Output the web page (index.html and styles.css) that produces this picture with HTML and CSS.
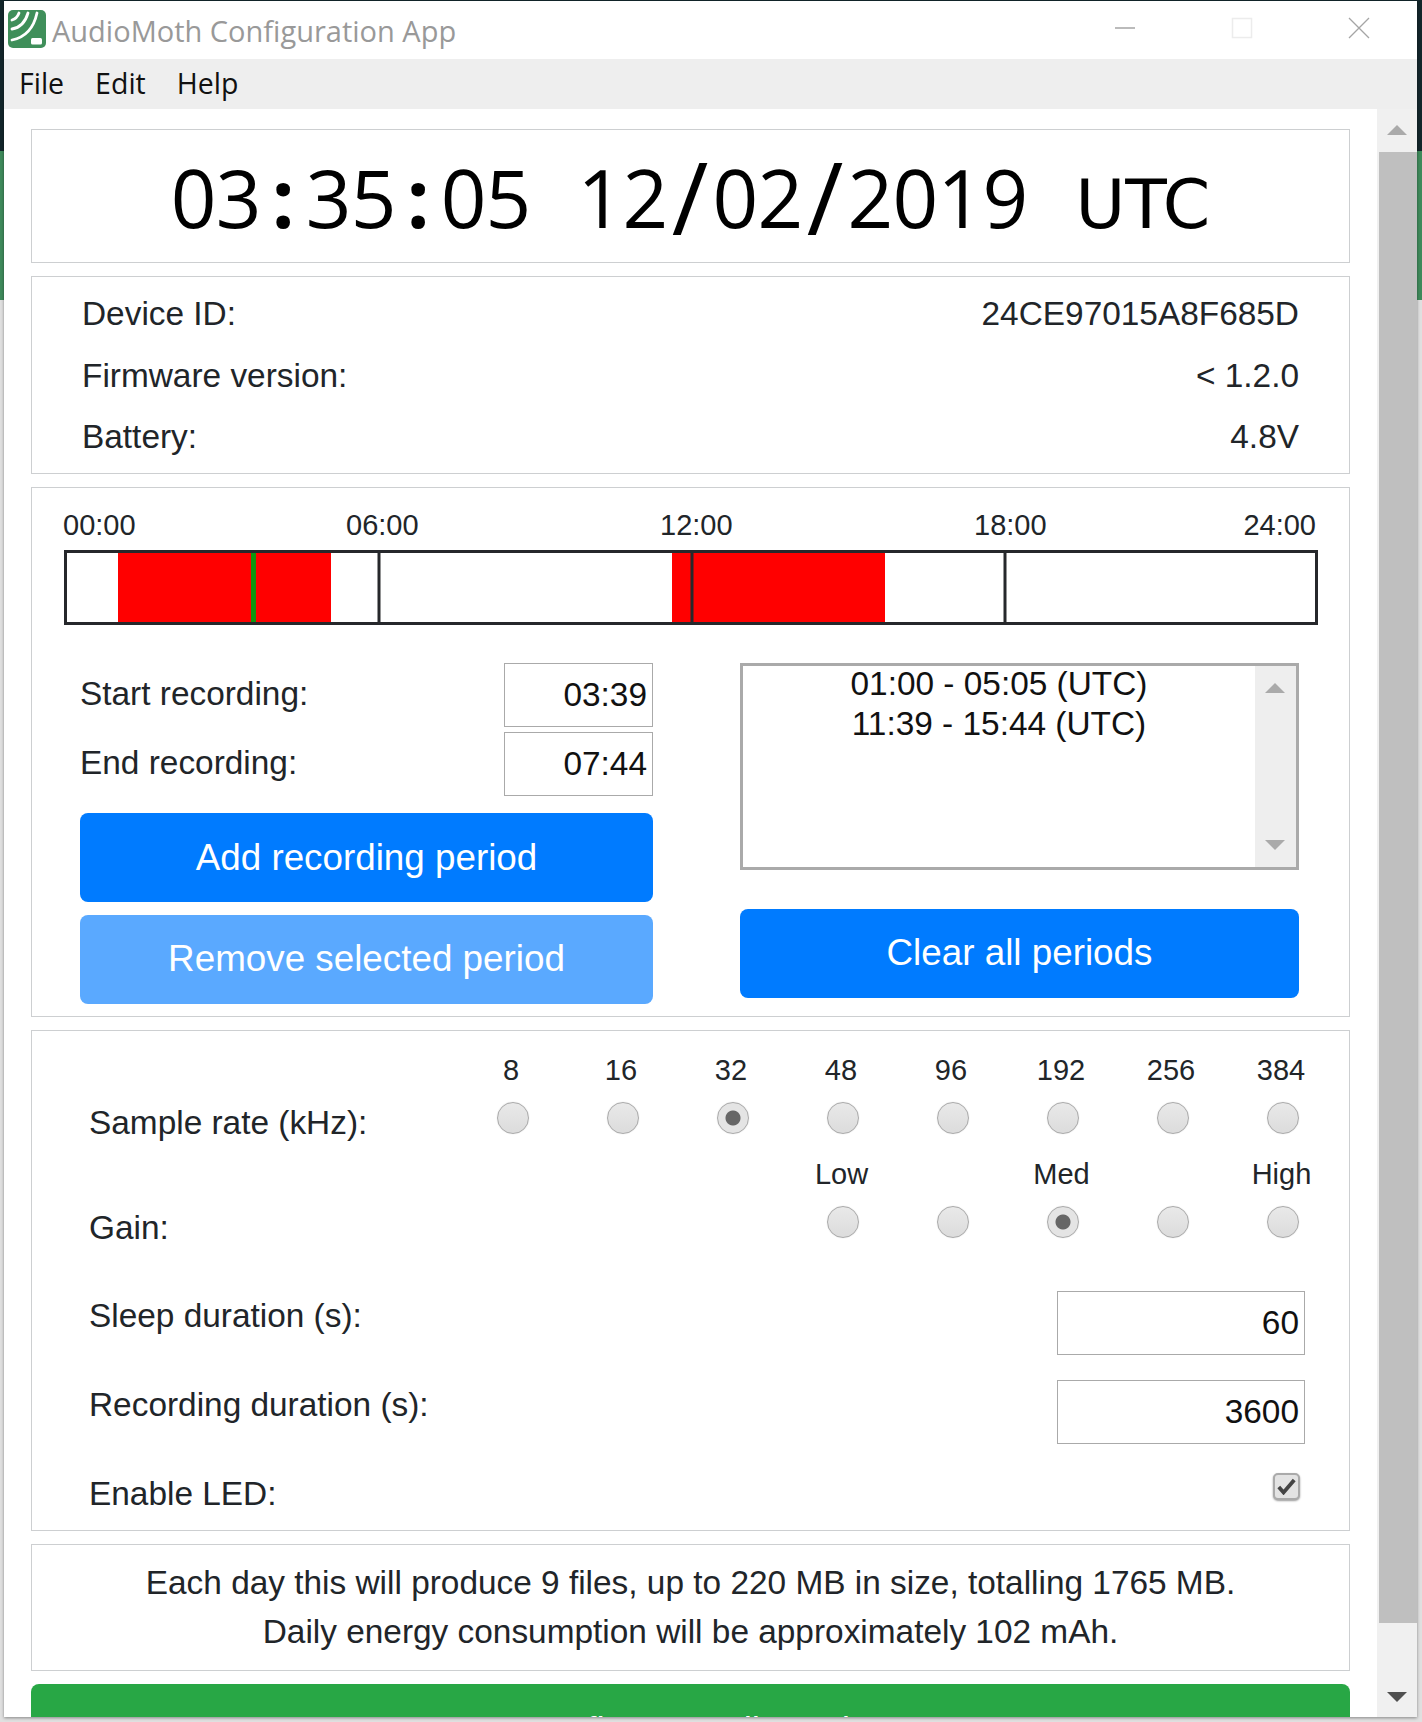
FILE: index.html
```html
<!DOCTYPE html>
<html lang="en">
<head>
<meta charset="utf-8">
<title>AudioMoth Configuration App</title>
<link rel="stylesheet" href="styles.css">
</head>
<body>
<div class="window">
  <header class="titlebar">
    <svg class="logo" viewBox="0 0 38 38"><rect width="38" height="38" rx="5" fill="#3f8f5a"/><g fill="none" stroke="#fff" stroke-width="2.800" stroke-linecap="round"><path d="M4 10Q9 8.500 11 3"/><path d="M4 19Q16 17 20 3"/><path d="M4 30Q24 26 29 3"/></g><rect x="23" y="28" width="11" height="6.500" rx="1.500" fill="#fff"/></svg>
    <span class="apptitle">AudioMoth Configuration App</span>
    <div class="winctl">
      <span class="ctl"><svg viewBox="0 0 22 22"><path d="M1 11h20" stroke="#a5a5a5" stroke-width="1.500"/></svg></span>
      <span class="ctl"><svg viewBox="0 0 22 22"><rect x="1.500" y="1.500" width="19" height="19" fill="none" stroke="#ececec" stroke-width="1.500"/></svg></span>
      <span class="ctl"><svg viewBox="0 0 22 22"><path d="M1 1l20 20M21 1L1 21" stroke="#a5a5a5" stroke-width="1.300"/></svg></span>
    </div>
  </header>
  <nav class="menubar"><span>File</span><span>Edit</span><span>Help</span></nav>
  <div class="viewport">
    <main class="content">
      <section class="panel clock"><span class="time">03<i class="colon">:</i>35<i class="colon">:</i>05 12<i class="slash">/</i>02<i class="slash">/</i>2019</span><span class="zone">UTC</span></section>
      <section class="panel device">
        <div class="devrow"><span>Device ID:</span><span>24CE97015A8F685D</span></div>
        <div class="devrow"><span>Firmware version:</span><span>&lt; 1.2.0</span></div>
        <div class="devrow"><span>Battery:</span><span>4.8V</span></div>
      </section>
      <section class="panel schedule">
        <div class="ticks"><span>00:00</span><span>06:00</span><span>12:00</span><span>18:00</span><span>24:00</span></div>
        <svg class="timeline" viewBox="0 0 1254 75" preserveAspectRatio="none">
          <rect x="0" y="0" width="1254" height="75" fill="#fff"/>
          <rect x="54" y="0" width="213" height="75" fill="#f00"/>
          <rect x="608" y="0" width="213" height="75" fill="#f00"/>
          <rect x="187" y="0" width="5" height="75" fill="#0f960f"/>
          <path d="M315 0v75M628 0v75M941 0v75" stroke="#26282b" stroke-width="3"/>
          <rect x="1.500" y="1.500" width="1251" height="72" fill="none" stroke="#26282b" stroke-width="3"/>
        </svg>
        <div class="periods">
          <div class="pcol">
            <div class="timerow"><label>Start recording:</label><div class="field small">03:39</div></div>
            <div class="timerow"><label>End recording:</label><div class="field small">07:44</div></div>
            <button class="btn add">Add recording period</button>
            <button class="btn faded">Remove selected period</button>
          </div>
          <div class="pcol right">
            <div class="listbox">
              <div class="items"><div>01:00 - 05:05 (UTC)</div><div>11:39 - 15:44 (UTC)</div></div>
              <div class="listscroll"><i class="up"></i><i class="down"></i></div>
            </div>
            <button class="btn clear">Clear all periods</button>
          </div>
        </div>
      </section>
      <section class="panel settings">
        <div class="setrow rate">
          <label>Sample rate (kHz):</label>
          <div class="radios">
            <div class="opt"><span>8</span><i class="radio"></i></div>
            <div class="opt"><span>16</span><i class="radio"></i></div>
            <div class="opt"><span>32</span><i class="radio on"></i></div>
            <div class="opt"><span>48</span><i class="radio"></i></div>
            <div class="opt"><span>96</span><i class="radio"></i></div>
            <div class="opt"><span>192</span><i class="radio"></i></div>
            <div class="opt"><span>256</span><i class="radio"></i></div>
            <div class="opt"><span>384</span><i class="radio"></i></div>
          </div>
        </div>
        <div class="setrow gain">
          <label>Gain:</label>
          <div class="radios">
            <div class="opt"><span>Low</span><i class="radio"></i></div>
            <div class="opt"><span>&nbsp;</span><i class="radio"></i></div>
            <div class="opt"><span>Med</span><i class="radio on"></i></div>
            <div class="opt"><span>&nbsp;</span><i class="radio"></i></div>
            <div class="opt"><span>High</span><i class="radio"></i></div>
          </div>
        </div>
        <div class="setrow dur"><label>Sleep duration (s):</label><div class="field wide">60</div></div>
        <div class="setrow dur"><label>Recording duration (s):</label><div class="field wide">3600</div></div>
        <div class="setrow led"><label>Enable LED:</label><span class="check"><svg viewBox="0 0 16 14"><path d="M1.500 7.500l4 4.500L14.500 1.500" fill="none" stroke="#444" stroke-width="3.200"/></svg></span></div>
      </section>
      <section class="panel summary">
        <p>Each day this will produce 9 files, up to 220 MB in size, totalling 1765 MB.</p>
        <p>Daily energy consumption will be approximately 102 mAh.</p>
      </section>
      <button class="btn configure">Configure AudioMoth</button>
    </main>
    <aside class="scrollbar">
      <i class="sb-up"></i>
      <div class="thumb"></div>
      <i class="sb-down"></i>
    </aside>
  </div>
</div>
</body>
</html>
```
FILE: styles.css
```css
* { box-sizing: border-box; }
html, body { margin: 0; height: 100%; }
body {
  width: 1422px; height: 1722px; overflow: hidden;
  background: linear-gradient(#13262b 0, #13262b 151px, #3f8a5b 151px, #3f8a5b 300px, #e0e0e0 300px);
  font-family: "Liberation Sans", Arial, sans-serif; color: #212529;
  padding: 1px 5px 5px 4px;
}
.window { width: 1413px; height: 1716px; background: #fff; display: flex; flex-direction: column; overflow: hidden; box-shadow: 0 1px 3px rgba(0,0,0,.4); }
.titlebar { height: 58px; flex: none; display: flex; align-items: center; padding-left: 4px; }
.logo { width: 38px; height: 38px; margin-top: -2px; flex: none; }
.apptitle { font: 29px "Open Sans", sans-serif; color: #999; margin-left: 6px; margin-top: 1px; }
.winctl { margin-left: auto; display: flex; align-items: center; margin-right: 47px; gap: 95px; margin-top: -4px; }
.ctl { width: 22px; height: 22px; display: block; }
.ctl svg { width: 22px; height: 22px; display: block; }
.menubar { height: 50px; flex: none; background: #eee; display: flex; align-items: center; padding-left: 15px; gap: 31px; font: 28.500px "Open Sans", sans-serif; color: #111; padding-bottom: 3px; }
.viewport { flex: 1; display: flex; min-height: 0; position: relative; }
.content { width: 1373px; flex: none; padding: 20px 0 0 27px; display: flex; flex-direction: column; gap: 13px; overflow: hidden; }
.panel { width: 1319px; border: 1px solid #cdcfd1; flex: none; background: #fff; }
.clock { height: 134px; display: flex; justify-content: center; align-items: baseline; color: #000; padding-top: 27px; }
.time { font: 80px "Open Sans", sans-serif; line-height: 1; letter-spacing: -.76px; word-spacing: 27px; white-space: nowrap; }
.colon, .slash { display: inline-block; width: 45px; text-align: center; font-style: normal; letter-spacing: 0; line-height: 0; }
.colon { font-weight: 700; }
.slash { font-size: 100px; vertical-align: -7px; }
.zone { font: 68px "DejaVu Sans", sans-serif; margin-left: 48px; line-height: 1; }
.device { height: 198px; padding: 17px 50px 0 50px; font-size: 33.400px; }
.devrow { display: flex; justify-content: space-between; height: 61.500px; line-height: 40px; }
.schedule { height: 530px; padding: 21px 32px 0; }
.ticks { display: grid; grid-template-columns: 283px 314px 314px 1fr auto; font-size: 29px; line-height: 32px; height: 32px; margin: 0 1px 9px -1px; }
.ticks span { display: block; }
.timeline { display: block; width: 1254px; height: 75px; }
.periods { display: flex; justify-content: space-between; padding: 38px 18px 0 16px; }
.pcol { display: flex; flex-direction: column; width: 573px; }
.pcol.right { width: 559px; }
.timerow { display: flex; justify-content: space-between; align-items: center; height: 64px; margin-bottom: 5px; font-size: 33.400px; }
.timerow + .timerow { margin-bottom: 0; }
.timerow label { margin-top: -3px; }
.field { border: 1px solid #aaa; text-align: right; color: #111; font-size: 33.400px; }
.field.small { width: 149px; height: 64px; line-height: 62px; padding-right: 5px; }
.field.wide { width: 248px; height: 64px; line-height: 62px; padding-right: 5px; }
.btn { display: block; border: 0; border-radius: 8px; color: #fff; background: #007bff; font-family: inherit; font-size: 36.800px; width: 100%; height: 89px; padding: 0; }
.add { margin-top: 17px; }
.faded { margin-top: 13px; background: #5aa9ff; padding-bottom: 2px; }
.clear { margin-top: 39px; padding-bottom: 2px; }
.listbox { height: 207px; border: 3px solid #aaa; display: flex; }
.items { flex: 1; text-align: center; font-size: 33.400px; line-height: 40px; color: #111; padding-right: 0; margin-top: -2px; }
.listscroll { width: 41px; background: #eee; position: relative; }
.up, .down { position: absolute; left: 10px; width: 0; height: 0; border-left: 10px solid transparent; border-right: 10px solid transparent; }
.up { top: 17px; border-bottom: 10px solid #aaa; }
.down { bottom: 17px; border-top: 10px solid #aaa; }
.settings { height: 501px; padding: 0 44px 0 57px; font-size: 33.400px; }
.setrow { display: flex; justify-content: space-between; }
.setrow label { display: block; }
.radios { display: flex; margin-right: -30px; }
.opt { width: 110px; display: flex; flex-direction: column; align-items: center; font-size: 29px; line-height: 34px; }
.opt span { display: block; height: 34px; margin-left: 2px; }
.gain .opt span { margin-left: 3px; }
.radio { display: block; width: 32px; height: 32px; margin: 15px 0 0 5px; border-radius: 50%; border: 1px solid #aaa; background: linear-gradient(#e9e9e9, #dcdcdc); box-shadow: 0 0 1px #ccc; }
.radio.on { background: radial-gradient(circle, #666 0 7px, #e4e4e4 8px); }
.rate { padding-top: 22px; height: 126px; }
.rate label { margin-top: 51px; }
.gain { height: 134px; }
.gain label { margin-top: 52px; }
.dur { height: 89px; }
.dur label { margin-top: 6px; }
.led { height: 60px; }
.led label { margin-top: 6px; }
.check { width: 27px; height: 27px; border: 2px solid #aaa; border-radius: 5px; background: #e3e3e3; display: flex; align-items: center; justify-content: center; margin-right: 5px; margin-top: 4px; box-shadow: 0 1px 2px rgba(0,0,0,.4); }
.check svg { width: 19px; height: 17px; display: block; }
.summary { height: 127px; text-align: center; font-size: 33.400px; padding-top: 18px; }
.summary p { margin: 0; height: 49px; line-height: 40px; }
.configure { width: 1319px; flex: none; background: #28a745; height: 89px; padding-top: 4px; }
.scrollbar { width: 40px; flex: none; background: #f0f0f0; position: relative; display: flex; flex-direction: column; }
.thumb { position: absolute; left: 2px; right: 0; top: 43px; height: 1471px; background: #bfbfbf; }
.sb-up, .sb-down { position: absolute; left: 10px; width: 0; height: 0; border-left: 10px solid transparent; border-right: 10px solid transparent; }
.sb-up { top: 16px; border-bottom: 10px solid #aaa; }
.sb-down { bottom: 15px; border-top: 10px solid #505050; }
```
